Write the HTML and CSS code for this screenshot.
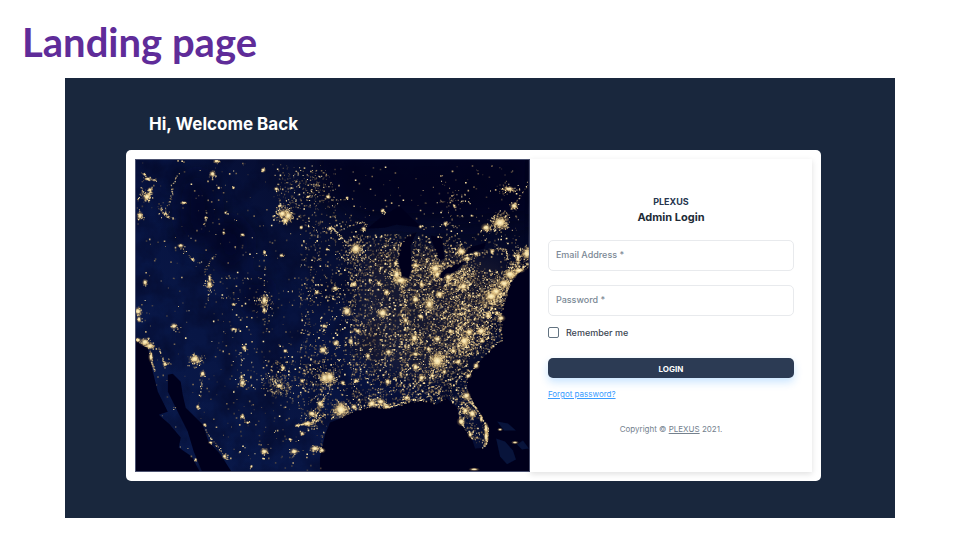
FILE: index.html
```
<!DOCTYPE html>
<html lang="en">
<head>
<meta charset="utf-8">
<meta name="viewport" content="width=device-width, initial-scale=1">
<title>Landing page</title>
<link rel="stylesheet" href="styles.css">
</head>
<body>
<h1 class="slide-title">Landing page</h1>
<main class="stage">
  <h2 class="welcome">Hi, Welcome Back</h2>
  <section class="card">
    <svg class="map" viewBox="0 0 395 313" preserveAspectRatio="xMidYMid slice" role="img" aria-label="City lights at night">
      <defs>
        <linearGradient id="land" x1="0" y1="0.75" x2="1" y2="0.1">
          <stop offset="0" stop-color="#09194a"/>
          <stop offset="0.4" stop-color="#071340"/>
          <stop offset="0.62" stop-color="#060d30"/>
          <stop offset="1" stop-color="#040826"/>
        </linearGradient>
        <radialGradient id="glow">
          <stop offset="0" stop-color="#fff3c9"/>
          <stop offset="0.3" stop-color="#f9e2a6" stop-opacity="0.92"/>
          <stop offset="0.6" stop-color="#c9a566" stop-opacity="0.35"/>
          <stop offset="1" stop-color="#a98b55" stop-opacity="0"/>
        </radialGradient>
        <filter id="terrain" x="0" y="0" width="100%" height="100%" color-interpolation-filters="sRGB">
          <feTurbulence type="fractalNoise" baseFrequency="0.04 0.035" numOctaves="5" seed="8"/>
          <feColorMatrix values="0 0 0 0 0.01  0 0 0 0 0.02  0 0 0 0 0.13  2.4 0 0 0 -0.9"/>
        </filter>
        <filter id="soft"><feGaussianBlur stdDeviation="0.7"/></filter>
        <filter id="haze"><feGaussianBlur stdDeviation="10"/></filter>
      </defs>
      <rect width="395" height="313" fill="url(#land)"/>
      <rect width="395" height="313" filter="url(#terrain)" opacity="0.5"/>
      <g fill="#02051f" filter="url(#haze)" opacity="0.7">
        <ellipse cx="62" cy="50" rx="17" ry="38"/>
        <ellipse cx="95" cy="85" rx="17" ry="25"/>
        <ellipse cx="120" cy="135" rx="13" ry="18"/>
        <path d="M180-10H400V60L330 65 220 60 180 20Z"/>
      </g>
      <g fill="#7a6243" filter="url(#haze)" opacity="0.15">
        <path d="M230 90 300 90 375 105 360 150 335 200 290 220 220 200Z"/>
      </g>
      <g fill="#01021e" filter="url(#soft)">
        <path id="pacific" d="M-2 180 12 189 16 209 22 233 32 253 23 256 34 266 45 279 43 289 56 298 65 315H-2Z"/>
        <path id="cortez" d="M32 216 37 215 45 223 47 236 50 249 67 266 73 283 85 296 97 315H67L58 293 52 273 42 253 32 233Z"/>
        <path id="atlantic" d="M185 315 185 299 190 276 195 264 205 260 215 254 235 248 258 250 275 243 295 242 302 246 312 239 323 249 325 263 338 281 341 290 352 289 355 269 342 249 333 233 333 219 345 203 358 189 368 181 367 159 368 153 375 126 382 115 397 106V315Z"/>
        <path id="michigan" d="M266 86 273 76 282 73 276 86 277 109 274 119 266 118 264 96Z"/>
        <path id="huron" d="M296 76 308 78 310 99 305 101 302 93 298 83Z"/>
        <path id="erie" d="M302 116 312 108 332 101 322 111 307 119Z"/>
        <path id="ontario" d="M327 96 335 88 352 83 350 89Z"/>
        <path id="superior" d="M232 69 248 56 265 46 278 59 288 68 262 65 250 68Z"/>
      </g>
      <g fill="#12306a" opacity="0.4" filter="url(#soft)">
        <path d="M363 263 374 265 382 272 370 272Z"/>
        <path d="M362 280 371 283 379 292 382 301 373 306 366 298Z"/>
        <path d="M383 286 389 282 395 290 388 291Z"/>
      </g>
      <g id="lights"></g>
    </svg>
    <form class="login">
      <p class="brand">PLEXUS</p>
      <h3 class="form-title">Admin Login</h3>
      <div class="fields">
        <div class="field">
          <input id="email" type="email" autocomplete="email" required>
          <label for="email">Email Address *</label>
        </div>
        <div class="field">
          <input id="password" type="password" autocomplete="current-password" required>
          <label for="password">Password *</label>
        </div>
      </div>
      <div class="remember">
        <input id="remember" type="checkbox">
        <label for="remember">Remember me</label>
      </div>
      <button class="submit" type="submit">LOGIN</button>
      <a class="forgot" href="#">Forgot password?</a>
      <p class="copyright">Copyright © <a href="#">PLEXUS</a> 2021.</p>
    </form>
  </section>
</main>
<script src="lights.js"></script>
</body>
</html>
```
FILE: styles.css
```
* { box-sizing: border-box; }

body {
  margin: 0;
  background: #fff;
  color: #212b36;
  font-family: Inter, "Liberation Sans", sans-serif;
}

h1, h2, h3, p { margin: 0; }

.slide-title {
  padding: 18px 22px 12px;
  color: #5f2c99;
  font: 700 40px/48px Lato, sans-serif;
}

.stage {
  margin: 0 65px 22px;
  padding: 33px 74px 37px 61px;
  background: #19273d;
}

.welcome {
  padding: 0 23px;
  margin-bottom: 13px;
  color: #fff;
  font-size: 17px;
  line-height: 26px;
}

.card {
  display: grid;
  grid-template-columns: 7fr 5fr;
  padding: 9px;
  border-radius: 5px;
  background: #fff;
}

.map {
  display: block;
  width: 100%;
  height: 100%;
  min-height: 313px;
  border: 1px solid #4c5270;
}

.login {
  display: flex;
  flex-direction: column;
  padding: 36px 18px;
  font-size: 9px;
  font-weight: 500;
  box-shadow: 0 2px 6px #00000020;
}

.brand {
  color: #27364f;
  font-weight: 700;
  line-height: 14px;
  text-align: center;
}

.form-title {
  margin-bottom: 15px;
  font-size: 11px;
  line-height: 16px;
  text-align: center;
}

.fields {
  display: grid;
  gap: 14px;
  margin-bottom: 11px;
}

.field { position: relative; }

.field input {
  display: block;
  width: 100%;
  height: 31px;
  padding: 0 8px;
  border: 1px solid #e8eaed;
  border-radius: 5px;
  background: #fff;
  font: inherit;
}

.field label {
  position: absolute;
  top: 7px;
  left: 8px;
  color: #7b8895;
  line-height: 16px;
  pointer-events: none;
}

.field input:focus + label,
.field input:valid + label { display: none; }

.remember {
  display: flex;
  align-items: center;
  gap: 7px;
  margin-bottom: 20px;
  color: #3c4652;
  line-height: 10px;
}

.remember input {
  appearance: none;
  width: 11px;
  height: 11px;
  margin: 0;
  border: 1px solid #637381;
  border-radius: 2px;
}

.remember input:checked { background: #2c3b54; }

.submit {
  height: 20px;
  border: 0;
  border-radius: 5px;
  background: #2c3b54;
  box-shadow: 0 4px 8px #1890ff3d;
  color: #fff;
  font: 700 8px/20px Inter, sans-serif;
}

.forgot {
  align-self: flex-start;
  margin-top: 10px;
  color: #3a9cff;
  font-size: 8px;
  font-weight: 400;
  line-height: 12px;
}

.copyright {
  margin-top: 23px;
  color: #74818e;
  font-size: 8px;
  font-weight: 400;
  line-height: 12px;
  text-align: center;
}

.copyright a { color: inherit; }
```
FILE: lights.js
```
const SVG_NS = "http://www.w3.org/2000/svg";
const layer = document.getElementById("lights");

// Repeatable pseudo-random numbers, so that the map is the same on each load.
let seed = 20211;
function random() {
  seed = (seed * 1664525 + 1013904223) >>> 0;
  return seed / 4294967296;
}
function spread() {
  return (random() + random() + random() - 1.5) / 1.5;
}

const water = ["pacific", "cortez", "atlantic", "michigan", "huron", "erie", "ontario", "superior"]
  .map((id) => document.getElementById(id));
function onLand(x, y) {
  return !water.some((shape) => shape.isPointInFill(new DOMPoint(x, y)));
}

// Four brightness steps, from faint villages to bright towns.
const levels = ["", "", "", ""];
function dot(x, y, level, size) {
  if (x < 0 || x > 394 || y < 0 || y > 312 || !onLand(x, y)) return;
  levels[level] += `M${x.toFixed(1)} ${y.toFixed(1)}h${size}v${size}h-${size}z`;
}
function pick() {
  const r = random();
  return r < 0.4 ? 0 : r < 0.7 ? 1 : r < 0.88 ? 2 : 3;
}

// [x, y, width, height, count]: areas with an even spread of towns.
const areas = [
  [0, 0, 190, 313, 420], [140, 5, 60, 55, 150], [195, 5, 190, 55, 110],
  [165, 60, 60, 200, 800], [215, 75, 60, 180, 1500], [265, 100, 70, 145, 2300],
  [320, 110, 60, 85, 1050], [310, 55, 75, 60, 170], [135, 200, 55, 35, 150],
  [70, 130, 100, 70, 90], [95, 190, 100, 110, 140], [325, 238, 26, 46, 130],
  [275, 88, 55, 35, 320], [245, 74, 70, 40, 330]
];
for (const [x, y, w, h, count] of areas) {
  for (let i = 0; i < count; i++) {
    let px = x + random() * w;
    let py = y + random() * h;
    // Prairie towns stand along a road grid.
    if (random() < 0.2 && px > 165 && px < 290) py = Math.round(py / 5) * 5;
    if (random() < 0.15 && px > 165 && px < 290) px = Math.round(px / 5) * 5;
    dot(px, py, pick(), random() < 0.4 ? 1.6 : 1);
  }
}

// [x, y, radius, count]: town clusters round a centre.
const clusters = [
  [149, 54, 11, 190], [0, 58, 10, 30], [11, 35, 9, 60], [27, 50, 10, 22], [10, 187, 11, 90],
  [382, 112, 18, 230], [365, 130, 22, 340], [357, 138, 18, 220], [347, 148, 20, 200],
  [366, 63, 15, 120], [395, 92, 12, 90], [328, 92, 14, 100], [266, 117, 16, 160],
  [302, 112, 12, 110], [320, 124, 20, 190], [295, 143, 16, 140], [332, 182, 22, 300],
  [303, 202, 20, 230], [280, 180, 16, 120], [350, 172, 14, 140], [367, 158, 8, 40],
  [192, 219, 14, 110], [205, 250, 13, 120], [239, 247, 16, 120], [330, 252, 10, 110],
  [177, 262, 14, 90], [143, 227, 20, 100], [135, 223, 14, 50], [220, 93, 18, 90],
  [330, 118, 25, 190], [386, 100, 20, 90], [318, 160, 25, 180], [178, 30, 22, 60],
  [155, 20, 18, 45], [185, 20, 18, 35], [155, 43, 20, 40], [60, 202, 12, 50],
  [128, 142, 12, 50], [74, 125, 9, 35], [317, 40, 22, 30], [371, 29, 10, 35]
];
for (const [x, y, r, count] of clusters) {
  for (let i = 0; i < count; i++) {
    dot(x + spread() * r, y + spread() * r, pick(), 1.1);
  }
}

// Chains of light along coasts, valleys and highways: points and dots for each.
const chains = [
  [[43, 12, 36, 24, 36, 34, 32, 45], 30], [[22, 48, 30, 56, 38, 59], 24],
  [[5, 12, 12, 19, 20, 20], 30], [[9, 39, 13, 34, 16, 27], 40],
  [[72, 40, 69, 62, 66, 68], 16], [[43, 86, 52, 95, 58, 102, 66, 103], 20],
  [[81, 92, 74, 102, 68, 112, 74, 130, 68, 150], 36], [[128, 92, 129, 110, 128, 155], 22],
  [[0, 181, 12, 189, 15, 202, 18, 213], 60], [[12, 184, 23, 190, 28, 203, 36, 205], 42],
  [[56, 192, 67, 212, 65, 230, 61, 250], 28], [[105, 193, 106, 218, 120, 230], 18],
  [[61, 256, 72, 276, 82, 288, 92, 301], 36], [[162, 266, 178, 264, 190, 255], 75],
  [[177, 263, 183, 252, 187, 241, 195, 229, 195, 219], 60],
  [[188, 272, 185, 288, 187, 292], 20], [[195, 260, 211, 250, 237, 245, 258, 247, 276, 241, 298, 240], 130],
  [[325, 249, 325, 262, 333, 275, 338, 281], 60], [[333, 235, 342, 250, 350, 264, 354, 278, 350, 287], 115],
  [[338, 295, 346, 292, 351, 289], 14], [[325, 236, 333, 240, 342, 250], 36],
  [[333, 218, 344, 202, 358, 187, 368, 180, 368, 162], 55],
  [[355, 153, 365, 134, 375, 120, 383, 112, 395, 103], 150], [[383, 112, 384, 98, 394, 89], 42],
  [[355, 67, 366, 62, 380, 46, 394, 22], 65], [[328, 95, 344, 94, 362, 89, 372, 90, 373, 99], 65],
  [[367, 28, 378, 31, 386, 29], 30], [[305, 42, 317, 40, 336, 42], 18],
  [[302, 188, 318, 174, 329, 165, 342, 157], 70], [[306, 200, 321, 186, 332, 179, 347, 171], 90],
  [[195, 39, 219, 39], 12], [[223, 88, 226, 68, 232, 64], 12], [[205, 70, 222, 63, 230, 62], 18],
  [[195, 66, 207, 78, 219, 89], 40], [[223, 86, 240, 104, 262, 118], 35],
  [[264, 84, 261, 100, 263, 116], 30], [[278, 88, 279, 105, 276, 119], 26],
  [[288, 69, 310, 64, 322, 67, 326, 91], 20], [[90, 118, 128, 119], 12],
  [[85, 138, 125, 141], 12], [[145, 130, 182, 137, 205, 137], 22], [[8, 11, 5, 30, 0, 42], 20]
];
for (const [points, count] of chains) {
  const segments = points.length / 2 - 1;
  for (let i = 0; i < count; i++) {
    const t = random() * segments;
    const k = Math.floor(t) * 2;
    const f = t % 1;
    const x = points[k] + (points[k + 2] - points[k]) * f;
    const y = points[k + 1] + (points[k + 3] - points[k + 1]) * f;
    dot(x + spread() * 1.6, y + spread() * 1.6, Math.floor(random() * 4), 1.1);
  }
}

// [x, y, rx, ry]: city glows.
const cities = [
  [12, 19, 4, 2.5], [14, 30, 3, 3], [11, 37, 5, 5], [4, 56, 4, 5], [77, 14, 4, 4], [81, 1, 4, 3],
  [128, 10, 3, 3], [141, 29, 3, 2.5], [153, 56, 5, 6], [147, 54, 5, 5], [150, 61, 4, 4], [145, 46, 3, 2],
  [48, 43, 4, 2], [70, 58, 2, 2], [30, 54, 2, 2], [45, 86, 4, 2.5], [57, 100, 2, 2],
  [107, 75, 3, 2], [90, 53, 2, 2], [88, 73, 2, 2], [98, 28, 2, 2], [83, 28, 2, 2],
  [146, 96, 2.5, 2.5], [129, 93, 2, 3], [166, 68, 2.5, 2.5], [173, 37, 2.5, 2], [193, 37, 3, 3],
  [195, 69, 3, 3], [192, 90, 2, 2], [74, 125, 3.5, 5], [74, 119, 2, 5], [9, 123, 3, 4],
  [2, 152, 5, 5], [129, 141, 4, 7], [129, 151, 3, 4], [98, 145, 2.5, 2], [182, 133, 3, 3],
  [38, 167, 4, 4], [3, 160, 3, 4], [9, 183, 6, 5], [14, 187, 5, 4], [2, 181, 4, 3], [15, 198, 3, 6],
  [59, 200, 7, 5], [67, 215, 3.5, 4], [109, 189, 3, 4], [107, 224, 4, 5], [106, 218, 2, 3],
  [29, 205, 3, 3], [62, 248, 2.5, 2.5], [107, 258, 3, 3], [112, 264, 2, 2], [69, 266, 2.5, 2],
  [75, 284, 3, 2], [89, 298, 3, 3], [129, 293, 5, 4], [159, 293, 5, 4], [180, 290, 6, 4],
  [187, 292, 4, 3], [167, 275, 3, 3], [60, 301, 2, 2], [116, 308, 2, 2], [98, 170, 4, 2],
  [148, 209, 3, 3], [150, 192, 3, 2.5], [144, 227, 5, 3], [167, 222, 3, 2],
  [188, 191, 5, 5], [189, 167, 3, 3], [190, 219, 7, 7], [195, 218, 6, 7], [185, 245, 4, 5], [177, 255, 5, 4],
  [172, 265, 6, 3], [162, 267, 3, 2], [155, 281, 2, 2], [206, 251, 9, 9], [219, 248, 4, 3],
  [237, 245, 5, 5], [246, 243, 5, 4], [252, 248, 5, 3], [272, 239, 4, 3], [253, 223, 4, 4],
  [221, 222, 3, 3], [208, 224, 3, 3], [201, 184, 4, 4], [216, 182, 3, 4], [223, 172, 4, 3],
  [233, 197, 3, 4], [254, 193, 4, 4], [280, 179, 5, 5], [271, 161, 3, 4], [281, 208, 4, 5],
  [287, 219, 4, 4], [298, 217, 3, 3], [303, 202, 9, 9], [310, 213, 3, 3], [324, 203, 4, 3],
  [330, 182, 6, 6], [335, 173, 5, 4], [347, 172, 6, 5], [348, 182, 3, 3], [342, 207, 4, 4],
  [334, 217, 4, 3], [319, 192, 4, 3], [303, 180, 5, 4], [294, 190, 3, 3], [281, 195, 4, 3],
  [316, 172, 3, 3], [332, 237, 5, 5], [338, 255, 5, 6], [327, 263, 5, 5], [331, 252, 4, 4],
  [336, 276, 3, 4], [352, 278, 3, 9], [352, 270, 3, 7], [347, 260, 2, 5], [381, 284, 4, 2],
  [366, 271, 3, 2], [367, 159, 5, 4], [363, 154, 3, 3], [354, 155, 3, 4], [357, 137, 8, 6],
  [362, 132, 6, 5], [370, 124, 7, 5], [376, 115, 8, 6], [385, 111, 7, 3], [393, 94, 6, 8],
  [384, 98, 3, 7], [366, 63, 9, 8], [352, 68, 6, 5], [380, 46, 5, 4], [375, 29, 6, 3],
  [327, 92, 6, 5], [333, 99, 5, 3], [342, 94, 4, 3], [358, 92, 3, 3], [301, 109, 7, 6],
  [303, 115, 4, 5], [314, 118, 5, 5], [329, 127, 5, 5], [305, 135, 5, 5], [295, 145, 5, 7],
  [281, 140, 5, 5], [287, 125, 3, 4], [266, 121, 9, 5], [262, 115, 5, 7], [261, 104, 3, 3],
  [281, 106, 4, 3], [252, 133, 4, 4], [248, 154, 7, 6], [212, 152, 6, 6], [200, 129, 4, 3],
  [219, 125, 4, 4], [244, 124, 3, 3], [235, 121, 2, 3], [221, 89, 7, 7], [229, 69, 3, 3],
  [248, 51, 3, 3], [286, 67, 2.5, 2.5], [311, 64, 3, 3], [286, 157, 4, 3], [354, 157, 4, 3],
  [320, 46, 2, 2], [340, 311, 6, 2], [212, 38, 2, 2]
];
for (const [x, y, rx, ry] of cities) {
  // Suburbs break up the round edge of each glow.
  for (let i = 0; i < rx * ry * 0.9; i++) {
    dot(x + spread() * rx * 1.3, y + spread() * ry * 1.3, 1 + Math.floor(random() * 3), 1.1);
  }
}

["#6e5b45", "#9c8258", "#d2b47c", "#f8e0a4"].forEach((fill, i) => {
  const path = document.createElementNS(SVG_NS, "path");
  path.setAttribute("d", levels[i]);
  path.setAttribute("fill", fill);
  path.setAttribute("opacity", [0.6, 0.75, 0.9, 1][i]);
  layer.append(path);
});

for (const [x, y, rx, ry] of cities) {
  const city = document.createElementNS(SVG_NS, "ellipse");
  city.setAttribute("cx", x);
  city.setAttribute("cy", y);
  city.setAttribute("rx", rx);
  city.setAttribute("ry", ry);
  city.setAttribute("fill", "url(#glow)");
  layer.append(city);
}
```
